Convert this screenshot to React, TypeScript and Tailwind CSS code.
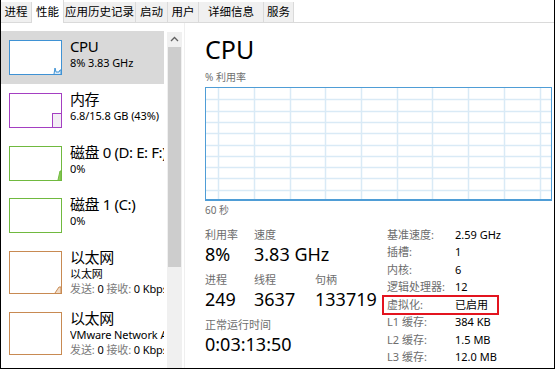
import React from "react";

const tabs = [
  { t: "进程", w: "w-[31px]" },
  { t: "性能", w: "w-[32px]", sel: true },
  { t: "应用历史记录", w: "w-[72px]" },
  { t: "启动", w: "w-[32px]" },
  { t: "用户", w: "w-[31px]" },
  { t: "详细信息", w: "w-[65px]" },
  { t: "服务", w: "w-[30px]" },
];

function Thumb({ kind }: { kind: string }) {
  if (kind === "cpu")
    return (
      <div className="w-[53px] h-[35px] border border-[#3f92d4] bg-white shrink-0">
        <svg width="51" height="33" className="block">
          <polyline points="44,33 45,27 46,31 49,31 50,29 51,29 51,33" fill="#dcebf7" stroke="#3f92d4" strokeWidth="1" />
        </svg>
      </div>
    );
  if (kind === "mem")
    return (
      <div className="w-[53px] h-[35px] border border-[#a43fc2] bg-white shrink-0">
        <svg width="51" height="33" className="block">
          <rect x="42.5" y="19.5" width="9" height="14" fill="#f3eef5" stroke="#a43fc2" strokeWidth="1" />
        </svg>
      </div>
    );
  if (kind === "disk0")
    return (
      <div className="w-[53px] h-[35px] border border-[#70b93f] bg-white shrink-0">
        <svg width="51" height="33" className="block">
          <polyline points="48,33 50,24 51,24 51,33" fill="#8fcf5f" stroke="#70b93f" strokeWidth="1" />
        </svg>
      </div>
    );
  if (kind === "disk1")
    return <div className="w-[53px] h-[35px] border border-[#70b93f] bg-white shrink-0" />;
  if (kind === "eth0")
    return (
      <div className="w-[53px] h-[43px] border border-[#c88a52] bg-white shrink-0">
        <svg width="51" height="41" className="block">
          <polyline points="45,41 49,35 51,35 51,41" fill="#f1dcc8" stroke="#c88a52" strokeWidth="1" />
        </svg>
      </div>
    );
  return <div className="w-[53px] h-[43px] border border-[#c88a52] bg-white shrink-0" />;
}

function Item({
  kind,
  title,
  sub,
  third,
  sel,
  h,
}: {
  kind: string;
  title: string;
  sub: string;
  third?: boolean;
  sel?: boolean;
  h: string;
}) {
  return (
    <div className={`${h} w-[163px] flex gap-[8px] pl-[8px] pt-[9px] overflow-hidden ${sel ? "bg-[#d9d9d9]" : ""}`}>
      <Thumb kind={kind} />
      <div className="-mt-[3px] min-w-0 flex-1 overflow-hidden whitespace-nowrap text-black">
        <div className="text-[15px] leading-[18px] tracking-[-0.4px]">{title}</div>
        <div className="text-[11px] leading-[15px] tracking-[-0.1px]">{sub}</div>
        {third && (
          <div className="text-[11px] leading-[15px] tracking-[-0.1px]">
            <span className="text-[#7a7a7a]">发送: </span>0 <span className="text-[#7a7a7a]">接收: </span>0 Kbps
          </div>
        )}
      </div>
    </div>
  );
}

function Graph() {
  const vx = [13, 49, 85, 120, 156, 192, 227, 263, 299, 335];
  const hy = [1, 2, 3, 4, 5, 6, 7, 8, 9].map((k) => Math.round(k * 11.3) + 0.5);
  return (
    <div className="w-[347px] h-[114px] border border-[#4f9dd6] border-b-2 bg-white">
      <svg width="345" height="111" className="block">
        {vx.map((x) => (
          <line key={x} x1={x - 0.5} y1="0" x2={x - 0.5} y2="111" stroke="#d9eaf6" strokeWidth="1.5" />
        ))}
        {hy.map((y) => (
          <line key={y} x1="0" y1={y} x2="345" y2={y} stroke="#d9eaf6" strokeWidth="1.5" />
        ))}
      </svg>
    </div>
  );
}

const specs: [string, string][] = [
  ["基准速度:", "2.59 GHz"],
  ["插槽:", "1"],
  ["内核:", "6"],
  ["逻辑处理器:", "12"],
  ["虚拟化:", "已启用"],
  ["L1 缓存:", "384 KB"],
  ["L2 缓存:", "1.5 MB"],
  ["L3 缓存:", "12.0 MB"],
];

function Stat({ label, value }: { label: string; value: string }) {
  return (
    <div className="flex flex-col">
      <div className="text-[11px] leading-[14px] text-[#6d6d6d]">{label}</div>
      <div className="text-[18px] leading-[24px] text-black whitespace-nowrap">{value}</div>
    </div>
  );
}

export default function App() {
  return (
    <div className="w-[556px] h-[370px] bg-white overflow-hidden font-['Noto_Sans','Noto_Sans_CJK_SC',sans-serif]">
      <div className="w-[555px] h-[369px] border-l border-r border-b border-black flex flex-col">
        {/* tabs */}
        <div className="h-[23px] flex items-end border-b border-[#dadada] shrink-0">
          {tabs.map((t) => (
            <div
              key={t.t}
              className={`${t.w} flex items-center justify-center text-[11.5px] text-black border-r border-[#dadada] ${
                t.sel ? "h-[23px] bg-white -mb-px" : "h-[20px] bg-[#f0f0f0]"
              }`}
            >
              {t.t}
            </div>
          ))}
        </div>
        <div className="flex flex-1 min-h-0">
          {/* left list */}
          <div className="w-[163px] pt-[8px] flex flex-col shrink-0">
            <Item kind="cpu" title="CPU" sub="8% 3.83 GHz" sel h="h-[53px]" />
            <Item kind="mem" title="内存" sub="6.8/15.8 GB (43%)" h="h-[53px]" />
            <Item kind="disk0" title="磁盘 0 (D: E: F:)" sub="0%" h="h-[52px]" />
            <Item kind="disk1" title="磁盘 1 (C:)" sub="0%" h="h-[53px]" />
            <Item kind="eth0" title="以太网" sub="以太网" third h="h-[61px]" />
            <Item kind="eth1" title="以太网" sub="VMware Network Adapter VMnet1" third h="h-[61px]" />
          </div>
          {/* scrollbar */}
          <div className="w-[15px] ml-[3px] mt-[9px] flex flex-col bg-[#f0f0f0] shrink-0">
            <div className="h-[13px] flex items-center justify-center">
              <svg width="9" height="6" viewBox="0 0 9 6">
                <polyline points="1,5 4.5,1.5 8,5" fill="none" stroke="#606060" strokeWidth="1.3" />
              </svg>
            </div>
            <div className="mx-[1px] mt-[2px] h-[220px] bg-[#cdcdcd]" />
          </div>
          {/* right pane */}
          <div className="flex-1 ml-[2px] border-l border-[#efefef] pl-[20px] flex flex-col">
            <div className="mt-[10px] text-[25px] leading-[32px] text-black">CPU</div>
            <div className="mt-[6px] text-[10px] leading-[12px] text-[#707070]">% 利用率</div>
            <div className="mt-[4px]">
              <Graph />
            </div>
            <div className="mt-[3px] text-[10px] leading-[12px] text-[#707070]">60 秒</div>
            <div className="mt-[12px] flex">
              <div className="w-[182px] flex flex-col gap-[7px]">
                <div className="flex">
                  <div className="w-[49px]"><Stat label="利用率" value="8%" /></div>
                  <Stat label="速度" value="3.83 GHz" />
                </div>
                <div className="flex">
                  <div className="w-[49px]"><Stat label="进程" value="249" /></div>
                  <div className="w-[61px]"><Stat label="线程" value="3637" /></div>
                  <Stat label="句柄" value="133719" />
                </div>
                <Stat label="正常运行时间" value="0:03:13:50" />
              </div>
              <div className="-mt-[2px] flex flex-col">
                {specs.map(([l, v]) => (
                  <div key={l} className="relative flex h-[17.5px] items-center text-[11px] whitespace-nowrap">
                    <div className="w-[68px] text-[#6d6d6d]">{l}</div>
                    <div className="text-black">{v}</div>
                    {l === "虚拟化:" && (
                      <div className="absolute left-[-5px] top-[-1px] w-[117px] h-[20px] border-2 border-[#e3141f]" />
                    )}
                  </div>
                ))}
              </div>
            </div>
          </div>
        </div>
      </div>
    </div>
  );
}
